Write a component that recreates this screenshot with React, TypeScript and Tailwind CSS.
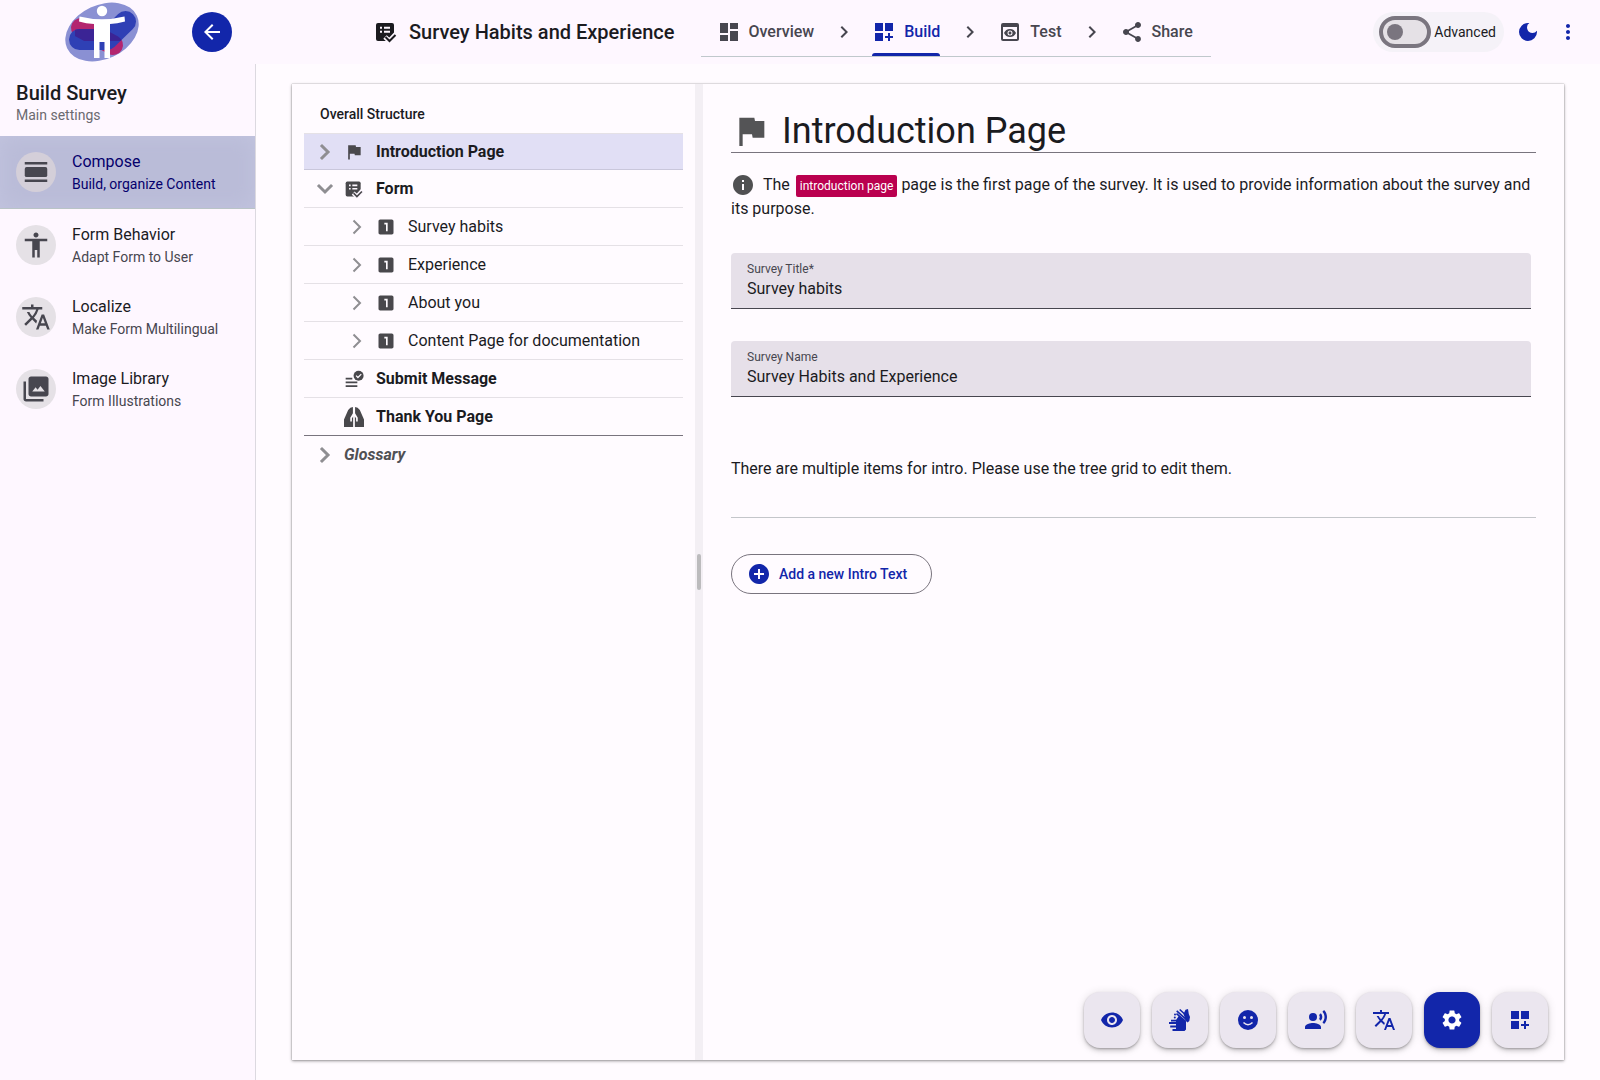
import { useState } from 'react';
import clsx from 'clsx';
import {
  MdAccessibility,
  MdAddCircle,
  MdArrowBack,
  MdChevronRight,
  MdDarkMode,
  MdDashboard,
  MdDashboardCustomize,
  MdFlag,
  MdInfo,
  MdLooksOne,
  MdMoreVert,
  MdPreview,
  MdRecordVoiceOver,
  MdSettings,
  MdShare,
  MdTranslate,
  MdVisibility,
} from 'react-icons/md';

type IconType = React.ComponentType<{ className?: string }>;

function Logo() {
  return (
    <svg viewBox="0 0 76 64" className="h-16 w-[76px]" aria-hidden="true">
      <mask id="logo-pill">
        <path d="M17 28 L49 45" stroke="#fff" strokeWidth="20" strokeLinecap="round" />
      </mask>
      <ellipse cx="38" cy="32" rx="38.5" ry="27" transform="rotate(-25 38 32)" fill="#8a90d3" />
      <path d="M17 28 L49 45" stroke="#b3256f" strokeWidth="20" strokeLinecap="round" />
      <g fill="none" strokeWidth="21" strokeLinecap="round" strokeLinejoin="round">
        <path d="M15.5 39.5 H43 L61.5 21.5" stroke="#2f40b5" />
        <path d="M15.5 39.5 H43 L61.5 21.5" stroke="#3b2495" mask="url(#logo-pill)" />
      </g>
      <circle cx="38" cy="11" r="5.2" fill="#fff" />
      <path
        d="M15.5 16.5 Q38 22 60.5 16.5 L61 21.5 Q53 23.5 46 24 V58 H40.5 V42 H35.5 V58 H30 V24 Q22 23.5 15 21.5Z"
        fill="#fff"
      />
    </svg>
  );
}

function FormCheckIcon({ className }: { className?: string }) {
  return (
    <svg viewBox="0 0 24 24" className={className} fill="none" aria-hidden="true">
      <rect x="2" y="3" width="18" height="18" rx="2" fill="currentColor" />
      <path d="M6 7.7h2M10 7.7h6M6 11.7h2M10 11.7h6" stroke="#fef7ff" strokeWidth="2" />
      <path d="M11 17l4.5 4 7-7.5" stroke="#fef7ff" strokeWidth="5" />
      <path d="M17 21.5l4-4v4z" fill="#fef7ff" />
      <path d="M11.5 17l4 4 6-6" stroke="currentColor" strokeWidth="2" />
    </svg>
  );
}

function ViewDayIcon({ className }: { className?: string }) {
  return (
    <svg viewBox="0 0 24 24" className={className} fill="currentColor" aria-hidden="true">
      <path d="M3 4h18v2H3zM3 18h18v2H3z" />
      <rect x="3" y="8" width="18" height="8" rx="1.5" />
    </svg>
  );
}

function PhotoLibraryIcon({ className }: { className?: string }) {
  return (
    <svg viewBox="0 0 24 24" className={className} fill="currentColor" aria-hidden="true">
      <path d="M9 14h10l-3.45-4.5-2.3 3-1.55-2L9 14Zm-1 4q-.825 0-1.413-.588T6 16V4q0-.825.588-1.413T8 2h12q.825 0 1.413.588T22 4v12q0 .825-.588 1.413T20 18H8Zm-4 4q-.825 0-1.413-.588T2 20V6h2v14h14v2H4Z" />
    </svg>
  );
}

function SubmitIcon({ className }: { className?: string }) {
  return (
    <svg viewBox="0 0 24 24" className={className} fill="none" stroke="currentColor" aria-hidden="true">
      <path d="M2 11.5h8M2 16h14M2 20.5h14" strokeWidth="2" />
      <circle cx="17.5" cy="8" r="6" fill="currentColor" stroke="none" />
      <path d="M14.5 8l2.2 2.2 4-4" stroke="#fffbff" strokeWidth="1.5" />
    </svg>
  );
}

function FoldedHandsIcon({ className }: { className?: string }) {
  return (
    <svg viewBox="0 0 24 24" className={className} fill="currentColor" aria-hidden="true">
      <path d="M10.7 0v7.5L7.5 13v4.5h2v-4l1.8-2.5V24H0v-9L5 3.5Q7.500 0 10.7 0z" />
      <path d="M13.3 0v7.5l3.2 5.500v4.500h-2v-4L12.700 11V24H24v-9L19 3.500Q16.500 0 13.300 0z" />
      <path d="M12 9v15" stroke="#fffbff" strokeWidth="1.6" />
    </svg>
  );
}

function SignLanguageIcon({ className }: { className?: string }) {
  return (
    <svg viewBox="0 0 24 24" className={className} fill="currentColor" aria-hidden="true">
      <path d="M8 13.5V12l3-4.3L18 14v7.5L16.5 23H4.500v-2H8v-1.500H2.200v-2H8V16H1v-2h7v-.5H3v-1.700h5z" />
      <path d="M15.5 6l2-4.200L20 1l.8 5L22 9l-.7 4-1.800 1.500-1.500-1.500z" />
      <path d="M11.7 1.5l6 5.500M8.700 2.800l9.800 8.900M8.500 5.700l9.500 8" fill="none" stroke="currentColor" strokeWidth="1.6" />
      <circle cx="7" cy="6.5" r="1" />
      <circle cx="6.8" cy="9.5" r="1" />
    </svg>
  );
}

function SmileIcon({ className }: { className?: string }) {
  return (
    <svg viewBox="0 0 24 24" className={className} aria-hidden="true">
      <circle cx="12" cy="12" r="10" fill="currentColor" />
      <circle cx="8.5" cy="9.5" r="1.5" fill="#ebe6ef" />
      <circle cx="15.5" cy="9.5" r="1.5" fill="#ebe6ef" />
      <path d="M7.5 14.5q4.5 4.5 9 0" fill="none" stroke="#ebe6ef" strokeWidth="1.5" />
    </svg>
  );
}

const steps: { label: string; icon: IconType }[] = [
  { label: 'Overview', icon: MdDashboard },
  { label: 'Build', icon: MdDashboardCustomize },
  { label: 'Test', icon: MdPreview },
  { label: 'Share', icon: MdShare },
];

const menuItems: { title: string; subtitle: string; icon: IconType }[] = [
  { title: 'Compose', subtitle: 'Build, organize Content', icon: ViewDayIcon },
  { title: 'Form Behavior', subtitle: 'Adapt Form to User', icon: MdAccessibility },
  { title: 'Localize', subtitle: 'Make Form Multilingual', icon: MdTranslate },
  { title: 'Image Library', subtitle: 'Form Illustrations', icon: PhotoLibraryIcon },
];

interface TreeRow {
  label: string;
  icon?: IconType;
  chevron?: 'right' | 'down';
  nested?: boolean;
}

const treeRows: TreeRow[] = [
  { label: 'Introduction Page', icon: MdFlag, chevron: 'right' },
  { label: 'Form', icon: FormCheckIcon, chevron: 'down' },
  { label: 'Survey habits', icon: MdLooksOne, chevron: 'right', nested: true },
  { label: 'Experience', icon: MdLooksOne, chevron: 'right', nested: true },
  { label: 'About you', icon: MdLooksOne, chevron: 'right', nested: true },
  { label: 'Content Page for documentation', icon: MdLooksOne, chevron: 'right', nested: true },
  { label: 'Submit Message', icon: SubmitIcon },
  { label: 'Thank You Page', icon: FoldedHandsIcon },
  { label: 'Glossary', chevron: 'right' },
];

const tools: { label: string; icon: IconType }[] = [
  { label: 'Preview', icon: MdVisibility },
  { label: 'Sign language', icon: SignLanguageIcon },
  { label: 'Easy reading', icon: SmileIcon },
  { label: 'Read aloud', icon: MdRecordVoiceOver },
  { label: 'Translate', icon: MdTranslate },
  { label: 'Settings', icon: MdSettings },
  { label: 'Customize', icon: MdDashboardCustomize },
];

function Header() {
  const [advanced, setAdvanced] = useState(false);

  return (
    <header className="flex h-16 shrink-0 items-center">
      <div className="flex w-64 shrink-0 items-center justify-between pr-6 pl-16">
        <Logo />
        <button
          aria-label="Back"
          className="flex size-10 items-center justify-center rounded-full bg-[#1226aa] text-white"
        >
          <MdArrowBack className="size-6" />
        </button>
      </div>

      <div className="flex flex-1 items-center justify-between pr-5 pl-[118px]">
        <div className="flex h-16 items-start">
          <div className="flex h-16 items-center gap-[11px]">
            <FormCheckIcon className="size-6" />
            <h1 className="text-xl font-medium">Survey Habits and Experience</h1>
          </div>
          <nav className="ml-[26px] flex h-[57px] items-center gap-[18px] border-b border-[#c0c8cc] pr-[18px] pl-4">
            {steps.map((step, idx) => {
              const Icon = step.icon;
              const active = step.label === 'Build';
              return (
                <div key={step.label} className="flex h-full items-center gap-4">
                  {idx > 0 && <MdChevronRight className="mt-2 size-6 text-[#47464f]" />}
                  <a
                    href="#"
                    className={clsx(
                      'flex h-full items-center gap-2 pt-2 font-medium',
                      active ? 'relative text-[#1226aa]' : 'text-[#47464f]'
                    )}
                  >
                    <Icon className="size-6" />
                    {step.label}
                    {active && <span className="absolute inset-x-0 bottom-0 h-[3px] rounded-t-[3px] bg-[#1226aa]" />}
                  </a>
                </div>
              );
            })}
          </nav>
        </div>

        <div className="flex items-center text-[#1226aa]">
          <label className="flex h-10 items-center gap-[3px] rounded-full bg-[#f5f2f8] pr-2 pl-1.5 text-sm text-[#1b1b1f]">
            <input
              type="checkbox"
              role="switch"
              checked={advanced}
              onChange={(e) => setAdvanced(e.target.checked)}
              className="flex h-8 w-[52px] appearance-none items-center rounded-full border-4 border-[#7a757f] bg-[#e5e1e6] px-1 before:size-4 before:rounded-full before:bg-[#7a757f] checked:justify-end"
            />
            Advanced
          </label>
          <button aria-label="Dark mode" className="ml-3 flex size-6 items-center justify-center">
            <MdDarkMode className="size-6" />
          </button>
          <button aria-label="More" className="ml-4 flex size-6 items-center justify-center">
            <MdMoreVert className="size-6" />
          </button>
        </div>
      </div>
    </header>
  );
}

function Sidebar() {
  return (
    <aside className="w-64 shrink-0 border-r border-[#dcd9e0]">
      <div className="flex h-[72px] flex-col pt-[17px] pl-4">
        <h2 className="text-xl leading-6 font-medium">Build Survey</h2>
        <p className="text-sm leading-5 text-[#6b6a70]">Main settings</p>
      </div>
      <nav>
        {menuItems.map((item) => {
          const Icon = item.icon;
          const active = item.title === 'Compose';
          return (
            <a
              key={item.title}
              href="#"
              className={clsx(
                'flex items-center gap-4 px-4 py-3.5',
                active && 'border-b border-[#b9c4c6] bg-[#babcd8] text-[#05006c] shadow-[inset_0_0_20px_#c2c4df]'
              )}
            >
              <span
                className={clsx(
                  'flex size-10 items-center justify-center rounded-full text-[#47464f]',
                  active ? 'bg-[#d4cfd9]' : 'bg-[#e5e1e6]'
                )}
              >
                <Icon className="size-[30px]" />
              </span>
              <span>
                <span className="block leading-6">{item.title}</span>
                <span className={clsx('block text-sm leading-5', !active && 'text-[#47464f]')}>{item.subtitle}</span>
              </span>
            </a>
          );
        })}
      </nav>
    </aside>
  );
}

function TreeChevron({ direction, thin }: { direction: 'right' | 'down'; thin?: boolean }) {
  return (
    <svg
      viewBox="0 0 22 22"
      className={clsx('size-[22px]', direction === 'down' && 'rotate-90')}
      fill="none"
      stroke="#8f8e92"
      strokeWidth={thin ? 2 : 3}
      aria-hidden="true"
    >
      <path d={thin ? 'M7.5 4.5l6.5 6.5-6.5 6.5' : 'M8 5l6 6-6 6'} strokeLinecap={thin ? 'butt' : 'square'} />
    </svg>
  );
}

function StructureTree() {
  return (
    <section className="w-[403px] shrink-0 px-3 pt-5">
      <h2 className="pb-[9px] pl-4 text-sm leading-5 font-medium">Overall Structure</h2>
      <ul className="border-t border-[#e5e1e6]">
        {treeRows.map((row, idx) => {
          const Icon = row.icon;
          const last = idx === treeRows.length - 1;
          return (
            <li
              key={row.label}
              className={clsx(
                !last && 'border-b',
                idx === 0 && 'border-[#c9c7db] bg-[#e1dff5]',
                idx > 0 && (idx === treeRows.length - 2 ? 'border-[#79747e]' : 'border-[#e5e1e6]')
              )}
            >
              <button
                className={clsx(
                  'flex w-full items-center text-left',
                  idx === 0 ? 'h-[35px]' : 'h-[37px]',
                  row.nested ? 'pl-[42px]' : 'pl-2.5 font-bold',
                  last && 'text-[#505054] italic'
                )}
              >
                <span className="size-[22px]">
                  {row.chevron && <TreeChevron direction={row.chevron} thin={row.nested} />}
                </span>
                {Icon && <Icon className="mr-3 ml-2 size-5 text-[#49484c]" />}
                <span className={clsx(!Icon && 'ml-2')}>{row.label}</span>
              </button>
            </li>
          );
        })}
      </ul>
    </section>
  );
}

interface FieldProps {
  id: string;
  label: string;
  value: string;
}

function Field({ id, label, value }: FieldProps) {
  return (
    <div className="mr-[5px] flex h-14 flex-col rounded-t border-b border-[#47464f] bg-[#e6e0e9] px-4 pt-2">
      <label htmlFor={id} className="text-xs leading-4 text-[#47464f]">
        {label}
      </label>
      <input id={id} defaultValue={value} className="h-6 w-full bg-transparent outline-none" />
    </div>
  );
}

function PageEditor() {
  return (
    <section className="min-w-0 flex-1 px-7 pt-[27px]">
      <h2 className="flex items-center gap-[11px] border-b border-[#79747e] pb-px text-4xl leading-10">
        <MdFlag className="size-10 text-[#545456]" />
        Introduction Page
      </h2>
      <p className="mt-5 leading-6">
        <MdInfo className="mr-2 inline size-6 align-top text-[#505052]" />
        The{' '}
        <span className="ml-0.5 rounded-xs bg-[#ba004f] px-1 py-1 text-xs text-white">introduction page</span>{' '}
        page is the first page of the survey. It is used to provide information about the survey and its purpose.
      </p>
      <div className="mt-8 space-y-8">
        <Field id="survey-title" label="Survey Title*" value="Survey habits" />
        <Field id="survey-name" label="Survey Name" value="Survey Habits and Experience" />
      </div>
      <p className="mt-[60px] leading-6">There are multiple items for intro. Please use the tree grid to edit them.</p>
      <hr className="mt-9 border-[#c4c6ca]" />
      <button className="mt-9 flex h-10 items-center gap-2 rounded-full border border-[#79747e] pr-6 pl-[15px] text-sm font-medium text-[#1226aa]">
        <MdAddCircle className="size-6" />
        Add a new Intro Text
      </button>
    </section>
  );
}

export default function App() {
  return (
    <div className="flex min-h-screen flex-col bg-[#fef7ff] font-['Roboto',sans-serif] text-base text-[#1b1b1f]">
      <Header />
      <div className="flex flex-1">
        <Sidebar />
        <main className="flex min-w-0 flex-1 bg-[#fffbff] px-9 py-5">
          <div className="relative flex min-w-0 flex-1 shadow-[0_1px_3px_rgba(0,0,0,0.4),0_0_1px_rgba(0,0,0,0.4)]">
            <StructureTree />
            <div className="flex w-2 shrink-0 items-center justify-center bg-[#f3eff4]">
              <span className="h-9 w-1 rounded-full bg-[#bcbbbd]" />
            </div>
            <PageEditor />

            {/* Floating tools */}
            <div className="absolute right-4 bottom-3 flex gap-3">
              {tools.map((tool) => {
                const Icon = tool.icon;
                return (
                  <button
                    key={tool.label}
                    aria-label={tool.label}
                    className={clsx(
                      'flex size-14 items-center justify-center rounded-2xl shadow-[0_3px_5px_-1px_rgba(0,0,0,0.2),0_1px_10px_rgba(0,0,0,0.12),0_1px_2px_rgba(0,0,0,0.2)]',
                      tool.label === 'Settings' ? 'bg-[#1226aa] text-white' : 'bg-[#ebe6ef] text-[#1226aa]'
                    )}
                  >
                    <Icon className="size-6" />
                  </button>
                );
              })}
            </div>
          </div>
        </main>
      </div>
    </div>
  );
}
